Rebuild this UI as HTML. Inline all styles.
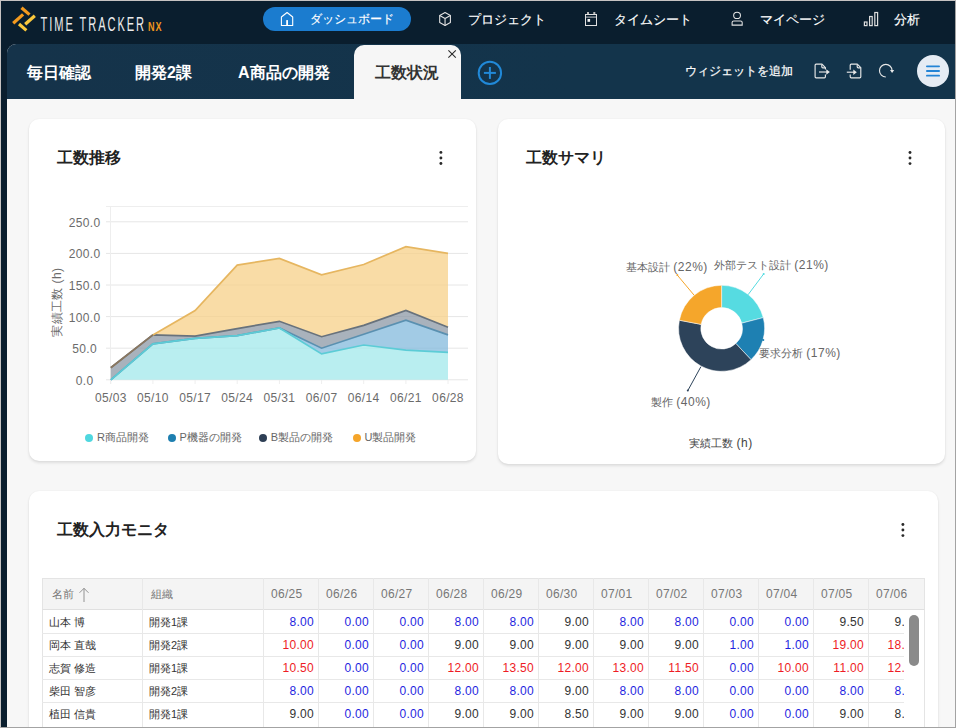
<!DOCTYPE html>
<html><head><meta charset="utf-8">
<style>
*{box-sizing:border-box;margin:0;padding:0}
html,body{width:956px;height:728px;overflow:hidden;background:#0b1d2e;font-family:"Liberation Sans",sans-serif}
#frame{position:absolute;left:0;top:0;width:956px;height:728px;background:#0a1e2e;overflow:hidden}
#border{position:absolute;left:0;top:0;width:956px;height:728px;border-top:1px solid #c6c3c2;border-left:1px solid #c6c3c2;border-right:1px solid #a3a3a3;border-bottom:1px solid #a3a3a3;z-index:100}
.abs{position:absolute}
.nav{position:absolute;color:#fff;font-size:13px;line-height:15px;white-space:nowrap;-webkit-text-stroke:0.15px currentColor}
#pill{position:absolute;left:263px;top:7px;width:148px;height:24px;border-radius:12px;background:#1b7ccf}
#main{position:absolute;left:7px;top:44px;width:949px;height:684px;border-top-left-radius:9px;overflow:hidden;background:#f7f7f7}
#tabbar{position:absolute;left:7px;top:44px;width:949px;height:55px;background:linear-gradient(90deg,#15334a 0%,#13344b 60%,#13344b 100%);border-top-left-radius:9px}
.tab{position:absolute;top:63px;color:#fff;font-size:16px;font-weight:bold;line-height:20px;white-space:nowrap}
#acttab{position:absolute;left:354px;top:45px;width:107px;height:55px;background:#f6f6f6;border-top-left-radius:10px;border-top-right-radius:10px}
.card{position:absolute;background:#fff;border-radius:10px;box-shadow:0 2px 3px rgba(0,0,0,0.10),0 0 2px rgba(0,0,0,0.06)}
.ctitle{position:absolute;font-size:16px;font-weight:bold;color:#222;line-height:20px;white-space:nowrap}
.kebab{position:absolute;width:4px;height:16px}
.kebab i{position:absolute;left:0;width:3.4px;height:3.4px;border-radius:50%;background:#333}
svg text{font-family:"Liberation Sans",sans-serif}
.ax{font-size:12px;fill:#6b6b6b;letter-spacing:0.35px}
.lb{font-size:12px;fill:#666}
.cj{font-size:11px}
.lt{font-size:12px;letter-spacing:0.5px}
.lb2{font-size:12px;fill:#444}
.leg{position:absolute;top:430px;font-size:11px;color:#666;line-height:14px;white-space:nowrap}
.leg i{display:inline-block;width:8px;height:8px;border-radius:50%;vertical-align:-0.5px;margin-right:4px}
#tbl{position:absolute;left:42px;top:578px;width:883px;height:160px;border:1px solid #e4e4e4;background:#fff}
.thbg{position:absolute;left:42px;top:578px;width:883px;height:32px;background:#f4f4f4;border:1px solid #e4e4e4;border-bottom:1px solid #e0e0e0}
.th{position:absolute;top:585px;height:18px;font-size:12px;line-height:18px;color:#777;padding-left:7px;white-space:nowrap;letter-spacing:0.3px}
.td{position:absolute;height:23px;font-size:12px;line-height:24px;color:#333;white-space:nowrap;overflow:hidden;letter-spacing:0.3px}
.cjk{font-size:11px;letter-spacing:0}
.tl{padding-left:6px}
.tr{text-align:right;padding-right:4px}
.hl{position:absolute;left:42px;width:862px;height:1px;background:#e8e8e8}
.vl{position:absolute;top:578px;width:1px;height:150px;background:#e8e8e8}
</style></head><body>
<div id="frame">
<!-- logo -->
<svg class="abs" style="left:0;top:0" width="170" height="44" viewBox="0 0 170 44">
  <g stroke-linecap="butt" stroke-width="3.2">
    <line x1="21.5" y1="7.8" x2="29.5" y2="14.6" stroke="#f39a1e"/>
    <line x1="13.2" y1="23.3" x2="23.1" y2="14.4" stroke="#f39a1e"/>
    <line x1="25.2" y1="24.3" x2="34.8" y2="15.8" stroke="#fbc93c"/>
    <line x1="19" y1="24" x2="26.4" y2="30.4" stroke="#fbc93c"/>
  </g>
  <g transform="translate(40.5,31) scale(0.56,1)"><text x="0" y="0" font-family="Liberation Sans" font-size="19.8" fill="#ececec" textLength="185" lengthAdjust="spacing">TIME TRACKER</text></g>
  <g transform="translate(148,31) scale(0.72,1)"><text x="0" y="0" font-family="Liberation Sans" font-weight="bold" font-size="12.6" fill="#f0961c" textLength="19" lengthAdjust="spacing">NX</text></g>
</svg>
<div id="pill"></div>
<!-- nav icons -->
<svg class="abs" style="left:0;top:0" width="956" height="44">
  <g fill="none" stroke="#ffffff" stroke-width="1.1" stroke-linejoin="round">
    <path d="M281.4,25.5 L281.4,17 L287.06,12.5 L292.7,17 L292.7,25.5 Z"/>
  </g>
  <rect x="286.2" y="20.1" width="1.8" height="5.5" fill="#fff"/>
  <g fill="none" stroke="#e2e2e2" stroke-width="1.1" stroke-linejoin="round">
    <path d="M445.06,12.5 L450.4,15.4 L450.4,22.5 L445.06,25.4 L439.7,22.5 L439.7,15.4 Z"/>
    <path d="M439.7,15.4 L445.06,18.4 L450.4,15.4 M445.06,18.4 L445.06,25.4"/>
  </g>
  <g fill="none" stroke="#e0e0e0" stroke-width="1">
    <rect x="585.5" y="14.5" width="11" height="11"/>
  </g>
  <rect x="586" y="16.5" width="10" height="1.2" fill="#a8adb2"/>
  <rect x="587" y="12" width="2" height="2" fill="#bbbbbb"/>
  <rect x="593.3" y="12" width="2" height="2" fill="#bbbbbb"/>
  <rect x="587.5" y="19" width="2.6" height="2.8" fill="#f4f4f4"/>
  <g fill="none" stroke="#e4e4e4" stroke-width="1.05">
    <ellipse cx="737.06" cy="15.4" rx="3.4" ry="3.1"/>
    <path d="M732.1,25.1 L732.1,22.6 Q732.1,20.9 733.8,20.9 L740.5,20.9 Q742.2,20.9 742.2,22.6 L742.2,25.1 Z"/>
  </g>
  <g fill="none" stroke="#dddddd" stroke-width="1.2">
    <rect x="864.4" y="22" width="2.6" height="3.6"/>
    <rect x="869.6" y="16.5" width="2.6" height="9.1"/>
    <rect x="874.8" y="12.5" width="2.8" height="13.1"/>
  </g>
</svg>
<div class="nav" style="left:310px;top:12px;font-size:12.3px">ダッシュボード</div>
<div class="nav" style="left:468px;top:12px">プロジェクト</div>
<div class="nav" style="left:613.5px;top:12px">タイムシート</div>
<div class="nav" style="left:760px;top:12px">マイページ</div>
<div class="nav" style="left:894px;top:12px">分析</div>

<div id="main"></div>
<div id="tabbar"></div>
<div id="acttab"></div>
<div class="tab" style="left:27px">毎日確認</div>
<div class="tab" style="left:135px">開発2課</div>
<div class="tab" style="left:238px">A商品の開発</div>
<div class="tab" style="left:375px;color:#333">工数状況</div>
<svg class="abs" style="left:0;top:40px" width="956" height="60" viewBox="0 40 956 60">
  <g stroke="#2a2a2a" stroke-width="1.05"><line x1="448.4" y1="50.3" x2="455.8" y2="57.7"/><line x1="455.8" y1="50.3" x2="448.4" y2="57.7"/></g>
  <g fill="none" stroke="#2189d8" stroke-width="2">
    <circle cx="489.9" cy="72.9" r="11.2"/>
    <line x1="489.9" y1="67" x2="489.9" y2="78.9"/><line x1="483.9" y1="72.9" x2="495.9" y2="72.9"/>
  </g>
  <g fill="none" stroke="#e8e8e8" stroke-width="1.15" stroke-linejoin="round">
    <path d="M825.4,69.6 L825.4,67.6 L822,64.2 L816.1,64.2 Q815.1,64.2 815.1,65.2 L815.1,76.8 Q815.1,77.8 816.1,77.8 L824.4,77.8 Q825.4,77.8 825.4,76.8 L825.4,74.4"/>
    <path d="M821.8,64.4 L821.8,66.8 Q821.8,67.8 822.8,67.8 L825.2,67.8"/>
    <path d="M819,72 L827,72"/>
    <path d="M850.2,69.8 L850.2,65.2 Q850.2,64.2 851.2,64.2 L857.3,64.2 L860.8,67.6 L860.8,76.8 Q860.8,77.8 859.8,77.8 L851.2,77.8 Q850.2,77.8 850.2,76.8 L850.2,74.6"/>
    <path d="M857.2,64.4 L857.2,66.8 Q857.2,67.8 858.2,67.8 L860.6,67.8"/>
    <path d="M846.8,72.2 L854,72.2"/>
    <path d="M885.8,77 A6.3,6.3 0 1 1 892.1,70.7"/>
  </g>
  <g fill="#e8e8e8">
    <path d="M826.3,69.3 L829.8,72 L826.3,74.7 Z"/>
    <path d="M853.3,69.5 L856.8,72.2 L853.3,74.9 Z"/>
    <path d="M890,70.1 L894.2,70.1 L892.1,73 Z"/>
  </g>
  <circle cx="933" cy="71" r="16" fill="#e5ecf4"/>
  <g stroke="#2384d6" stroke-width="1.8" stroke-linecap="round"><line x1="926.9" y1="66.3" x2="939.1" y2="66.3"/><line x1="926.9" y1="71" x2="939.1" y2="71"/><line x1="926.9" y1="75.7" x2="939.1" y2="75.7"/></g>
</svg>
<div class="nav" style="left:684.6px;top:63.5px;color:#fafafa;font-size:12px;-webkit-text-stroke:0.25px #fafafa">ウィジェットを追加</div>

<!-- cards -->
<div class="card" style="left:29px;top:119px;width:447px;height:342px"></div>
<div class="card" style="left:498px;top:119px;width:447px;height:345px"></div>
<div class="card" style="left:29px;top:491px;width:909px;height:260px"></div>
<div class="ctitle" style="left:57px;top:148px">工数推移</div>
<div class="ctitle" style="left:526px;top:148px">工数サマリ</div>
<div class="ctitle" style="left:57px;top:520px">工数入力モニタ</div>
<svg class="abs" style="left:0;top:0" width="956" height="728"><g fill="#2a2a2a"><circle cx="440.9" cy="152.40" r="1.45"/><circle cx="440.9" cy="157.95" r="1.45"/><circle cx="440.9" cy="163.50" r="1.45"/><circle cx="910" cy="152.50" r="1.45"/><circle cx="910" cy="158.05" r="1.45"/><circle cx="910" cy="163.60" r="1.45"/><circle cx="902.9" cy="524.50" r="1.45"/><circle cx="902.9" cy="530.05" r="1.45"/><circle cx="902.9" cy="535.60" r="1.45"/></g></svg>



<svg class="abs" style="left:0;top:0" width="956" height="728" viewBox="0 0 956 728">
<line x1="106" y1="379.8" x2="468" y2="379.8" stroke="#e6e6e6" stroke-width="1"/>
<text x="84.7" y="384.8" text-anchor="middle" class="ax">0.0</text>
<line x1="106" y1="348.2" x2="468" y2="348.2" stroke="#e6e6e6" stroke-width="1"/>
<text x="84.7" y="353.2" text-anchor="middle" class="ax">50.0</text>
<line x1="106" y1="316.6" x2="468" y2="316.6" stroke="#e6e6e6" stroke-width="1"/>
<text x="84.7" y="321.6" text-anchor="middle" class="ax">100.0</text>
<line x1="106" y1="285.0" x2="468" y2="285.0" stroke="#e6e6e6" stroke-width="1"/>
<text x="84.7" y="290.0" text-anchor="middle" class="ax">150.0</text>
<line x1="106" y1="253.4" x2="468" y2="253.4" stroke="#e6e6e6" stroke-width="1"/>
<text x="84.7" y="258.4" text-anchor="middle" class="ax">200.0</text>
<line x1="106" y1="221.8" x2="468" y2="221.8" stroke="#e6e6e6" stroke-width="1"/>
<text x="84.7" y="226.8" text-anchor="middle" class="ax">250.0</text>
<line x1="106" y1="206.5" x2="468" y2="206.5" stroke="#eeeeee" stroke-width="1"/>
<line x1="110.5" y1="206" x2="110.5" y2="384" stroke="#eeeeee" stroke-width="1"/>
<line x1="110.8" y1="380" x2="110.8" y2="384" stroke="#eeeeee" stroke-width="1"/>
<text x="110.8" y="402" text-anchor="middle" class="ax">05/03</text>
<line x1="152.9" y1="380" x2="152.9" y2="384" stroke="#eeeeee" stroke-width="1"/>
<text x="152.9" y="402" text-anchor="middle" class="ax">05/10</text>
<line x1="195.1" y1="380" x2="195.1" y2="384" stroke="#eeeeee" stroke-width="1"/>
<text x="195.1" y="402" text-anchor="middle" class="ax">05/17</text>
<line x1="237.2" y1="380" x2="237.2" y2="384" stroke="#eeeeee" stroke-width="1"/>
<text x="237.2" y="402" text-anchor="middle" class="ax">05/24</text>
<line x1="279.4" y1="380" x2="279.4" y2="384" stroke="#eeeeee" stroke-width="1"/>
<text x="279.4" y="402" text-anchor="middle" class="ax">05/31</text>
<line x1="321.6" y1="380" x2="321.6" y2="384" stroke="#eeeeee" stroke-width="1"/>
<text x="321.6" y="402" text-anchor="middle" class="ax">06/07</text>
<line x1="363.7" y1="380" x2="363.7" y2="384" stroke="#eeeeee" stroke-width="1"/>
<text x="363.7" y="402" text-anchor="middle" class="ax">06/14</text>
<line x1="405.9" y1="380" x2="405.9" y2="384" stroke="#eeeeee" stroke-width="1"/>
<text x="405.9" y="402" text-anchor="middle" class="ax">06/21</text>
<line x1="448.0" y1="380" x2="448.0" y2="384" stroke="#eeeeee" stroke-width="1"/>
<text x="448.0" y="402" text-anchor="middle" class="ax">06/28</text>
<g fill-opacity="0.75">
<path d="M110.8,379.8 L152.9,343.8 L195.1,338.4 L237.2,335.6 L279.4,328.0 L321.6,353.9 L363.7,345.0 L405.9,350.1 L448.0,352.3 L448.0,379.8 L405.9,379.8 L363.7,379.8 L321.6,379.8 L279.4,379.8 L237.2,379.8 L195.1,379.8 L152.9,379.8 L110.8,379.8 Z" fill="#a2e8eb"/>
<path d="M110.8,379.8 L152.9,343.8 L195.1,338.4 L237.2,335.6 L279.4,328.0 L321.6,348.2 L363.7,334.3 L405.9,320.1 L448.0,334.9 L448.0,352.3 L405.9,350.1 L363.7,345.0 L321.6,353.9 L279.4,328.0 L237.2,335.6 L195.1,338.4 L152.9,343.8 L110.8,379.8 Z" fill="#83badc"/>
<path d="M110.8,367.7 L152.9,334.9 L195.1,336.2 L237.2,328.6 L279.4,321.3 L321.6,336.7 L363.7,325.4 L405.9,310.5 L448.0,327.3 L448.0,334.9 L405.9,320.1 L363.7,334.3 L321.6,348.2 L279.4,328.0 L237.2,335.6 L195.1,338.4 L152.9,343.8 L110.8,379.8 Z" fill="#8c98a6"/>
<path d="M110.8,367.7 L152.9,334.9 L195.1,310.5 L237.2,265.1 L279.4,258.5 L321.6,274.9 L363.7,264.5 L405.9,246.6 L448.0,253.4 L448.0,327.3 L405.9,310.5 L363.7,325.4 L321.6,336.7 L279.4,321.3 L237.2,328.6 L195.1,336.2 L152.9,334.9 L110.8,367.7 Z" fill="#f7d088"/>
</g>
<path d="M110.8,379.8 L152.9,343.8 L195.1,338.4 L237.2,335.6 L279.4,328.0 L321.6,348.2 L363.7,334.3 L405.9,320.1 L448.0,334.9" fill="none" stroke="#5a90b0" stroke-width="1.7"/>
<path d="M110.8,379.8 L152.9,343.8 L195.1,338.4 L237.2,335.6 L279.4,328.0 L321.6,353.9 L363.7,345.0 L405.9,350.1 L448.0,352.3" fill="none" stroke="#5cccd6" stroke-width="1.7"/>
<path d="M110.8,367.7 L152.9,334.9 L195.1,336.2 L237.2,328.6 L279.4,321.3 L321.6,336.7 L363.7,325.4 L405.9,310.5 L448.0,327.3" fill="none" stroke="#68727c" stroke-width="1.7"/>
<path d="M110.8,367.7 L152.9,334.9" fill="none" stroke="#8a7760" stroke-width="1.8"/>
<path d="M152.9,334.9 L195.1,310.5 L237.2,265.1 L279.4,258.5 L321.6,274.9 L363.7,264.5 L405.9,246.6 L448.0,253.4" fill="none" stroke="#e6b660" stroke-width="1.7"/>
<text transform="translate(60.5,302) rotate(-90)" text-anchor="middle" class="ax" style="font-size:11.5px">実績工数 <tspan style="font-size:12px;letter-spacing:0.5px">(h)</tspan></text>
<path d="M721.60,285.30 A43,43 0 0 1 763.25,317.61 L741.75,323.13 A20.8,20.8 0 0 0 721.60,307.50 Z" fill="#56dbe1" stroke="#ffffff" stroke-width="0.5"/>
<path d="M763.25,317.61 A43,43 0 0 1 751.04,359.65 L735.84,343.46 A20.8,20.8 0 0 0 741.75,323.13 Z" fill="#1e80b2" stroke="#ffffff" stroke-width="0.5"/>
<path d="M751.04,359.65 A43,43 0 0 1 679.36,320.24 L701.17,324.40 A20.8,20.8 0 0 0 735.84,343.46 Z" fill="#2d435a" stroke="#ffffff" stroke-width="0.5"/>
<path d="M679.36,320.24 A43,43 0 0 1 721.60,285.30 L721.60,307.50 A20.8,20.8 0 0 0 701.17,324.40 Z" fill="#f5a62b" stroke="#ffffff" stroke-width="0.5"/>
<line x1="677.3" y1="275.1" x2="694.1" y2="295.2" stroke="#f5a62b" stroke-width="1"/>
<line x1="763.7" y1="273.9" x2="748.1" y2="294.7" stroke="#56dbe1" stroke-width="1"/>
<line x1="700.9" y1="366.7" x2="687.8" y2="390.6" stroke="#2d435a" stroke-width="1"/>
<line x1="759" y1="338" x2="763" y2="340" stroke="#1e80b2" stroke-width="1"/>
<circle cx="677.3" cy="275.1" r="1" fill="#f5a62b"/><circle cx="763.7" cy="273.9" r="1" fill="#56dbe1"/><circle cx="687.8" cy="390.6" r="1" fill="#2d435a"/><circle cx="763.3" cy="340" r="1" fill="#1e80b2"/>
<text x="626" y="270.5" class="lb"><tspan class="cj">基本設計</tspan> <tspan class="lt">(22%)</tspan></text>
<text x="714" y="268.5" class="lb"><tspan class="cj">外部テスト設計</tspan> <tspan class="lt">(21%)</tspan></text>
<text x="759" y="356.5" class="lb"><tspan class="cj">要求分析</tspan> <tspan class="lt">(17%)</tspan></text>
<text x="651" y="406" class="lb"><tspan class="cj">製作</tspan> <tspan class="lt">(40%)</tspan></text>
<text x="721" y="447" text-anchor="middle" class="lb2"><tspan class="cj">実績工数</tspan> <tspan class="lt">(h)</tspan></text>
</svg>
<div class="leg" style="left:85px"><i style="background:#4fd7df"></i>R商品開発</div>
<div class="leg" style="left:167.5px"><i style="background:#1e7fb0"></i>P機器の開発</div>
<div class="leg" style="left:258.7px"><i style="background:#2e3f55"></i>B製品の開発</div>
<div class="leg" style="left:352.5px"><i style="background:#f5a52a"></i>U製品開発</div>

<!-- table -->
<div id="tbl"></div>
<div class="thbg"></div>
<div class="hl" style="top:633px"></div>
<div class="hl" style="top:656px"></div>
<div class="hl" style="top:679px"></div>
<div class="hl" style="top:702px"></div>
<div class="vl" style="left:142px"></div>
<div class="vl" style="left:263px"></div>
<div class="vl" style="left:318px"></div>
<div class="vl" style="left:373px"></div>
<div class="vl" style="left:428px"></div>
<div class="vl" style="left:483px"></div>
<div class="vl" style="left:538px"></div>
<div class="vl" style="left:593px"></div>
<div class="vl" style="left:648px"></div>
<div class="vl" style="left:703px"></div>
<div class="vl" style="left:758px"></div>
<div class="vl" style="left:813px"></div>
<div class="vl" style="left:868px"></div>
<div class="th cjk" style="left:45px;width:99px">名前</div><svg class="abs" style="left:77.5px;top:587px" width="12" height="16"><path d="M6,1.3 L6,15 M1.5,5.8 L6,1.3 L10.5,5.8" fill="none" stroke="#888" stroke-width="0.9"/></svg>
<div class="th cjk" style="left:144px;width:120px">組織</div>
<div class="th" style="left:264px;width:54px">06/25</div>
<div class="th" style="left:319px;width:54px">06/26</div>
<div class="th" style="left:374px;width:54px">06/27</div>
<div class="th" style="left:429px;width:54px">06/28</div>
<div class="th" style="left:484px;width:54px">06/29</div>
<div class="th" style="left:539px;width:54px">06/30</div>
<div class="th" style="left:594px;width:54px">07/01</div>
<div class="th" style="left:649px;width:54px">07/02</div>
<div class="th" style="left:704px;width:54px">07/03</div>
<div class="th" style="left:759px;width:54px">07/04</div>
<div class="th" style="left:814px;width:54px">07/05</div>
<div class="th" style="left:869px;width:54px">07/06</div>
<div class="td tl cjk" style="left:43px;top:610px;width:99px">山本 博</div>
<div class="td tl cjk" style="left:143px;top:610px;width:120px">開発1課</div>
<div class="td tr" style="left:264px;top:610px;width:54px;color:#1f1fe0">8.00</div>
<div class="td tr" style="left:319px;top:610px;width:54px;color:#1f1fe0">0.00</div>
<div class="td tr" style="left:374px;top:610px;width:54px;color:#1f1fe0">0.00</div>
<div class="td tr" style="left:429px;top:610px;width:54px;color:#1f1fe0">8.00</div>
<div class="td tr" style="left:484px;top:610px;width:54px;color:#1f1fe0">8.00</div>
<div class="td tr" style="left:539px;top:610px;width:54px;color:#333">9.00</div>
<div class="td tr" style="left:594px;top:610px;width:54px;color:#1f1fe0">8.00</div>
<div class="td tr" style="left:649px;top:610px;width:54px;color:#1f1fe0">8.00</div>
<div class="td tr" style="left:704px;top:610px;width:54px;color:#1f1fe0">0.00</div>
<div class="td tr" style="left:759px;top:610px;width:54px;color:#1f1fe0">0.00</div>
<div class="td tr" style="left:814px;top:610px;width:54px;color:#333">9.50</div>
<div class="td tr" style="left:869px;top:610px;width:54px;color:#333">9.00</div>
<div class="td tl cjk" style="left:43px;top:633px;width:99px">岡本 直哉</div>
<div class="td tl cjk" style="left:143px;top:633px;width:120px">開発2課</div>
<div class="td tr" style="left:264px;top:633px;width:54px;color:#ee1c25">10.00</div>
<div class="td tr" style="left:319px;top:633px;width:54px;color:#1f1fe0">0.00</div>
<div class="td tr" style="left:374px;top:633px;width:54px;color:#1f1fe0">0.00</div>
<div class="td tr" style="left:429px;top:633px;width:54px;color:#333">9.00</div>
<div class="td tr" style="left:484px;top:633px;width:54px;color:#333">9.00</div>
<div class="td tr" style="left:539px;top:633px;width:54px;color:#333">9.00</div>
<div class="td tr" style="left:594px;top:633px;width:54px;color:#333">9.00</div>
<div class="td tr" style="left:649px;top:633px;width:54px;color:#333">9.00</div>
<div class="td tr" style="left:704px;top:633px;width:54px;color:#1f1fe0">1.00</div>
<div class="td tr" style="left:759px;top:633px;width:54px;color:#1f1fe0">1.00</div>
<div class="td tr" style="left:814px;top:633px;width:54px;color:#ee1c25">19.00</div>
<div class="td tr" style="left:869px;top:633px;width:54px;color:#ee1c25">18.00</div>
<div class="td tl cjk" style="left:43px;top:656px;width:99px">志賀 修造</div>
<div class="td tl cjk" style="left:143px;top:656px;width:120px">開発1課</div>
<div class="td tr" style="left:264px;top:656px;width:54px;color:#ee1c25">10.50</div>
<div class="td tr" style="left:319px;top:656px;width:54px;color:#1f1fe0">0.00</div>
<div class="td tr" style="left:374px;top:656px;width:54px;color:#1f1fe0">0.00</div>
<div class="td tr" style="left:429px;top:656px;width:54px;color:#ee1c25">12.00</div>
<div class="td tr" style="left:484px;top:656px;width:54px;color:#ee1c25">13.50</div>
<div class="td tr" style="left:539px;top:656px;width:54px;color:#ee1c25">12.00</div>
<div class="td tr" style="left:594px;top:656px;width:54px;color:#ee1c25">13.00</div>
<div class="td tr" style="left:649px;top:656px;width:54px;color:#ee1c25">11.50</div>
<div class="td tr" style="left:704px;top:656px;width:54px;color:#1f1fe0">0.00</div>
<div class="td tr" style="left:759px;top:656px;width:54px;color:#ee1c25">10.00</div>
<div class="td tr" style="left:814px;top:656px;width:54px;color:#ee1c25">11.00</div>
<div class="td tr" style="left:869px;top:656px;width:54px;color:#ee1c25">12.00</div>
<div class="td tl cjk" style="left:43px;top:679px;width:99px">柴田 智彦</div>
<div class="td tl cjk" style="left:143px;top:679px;width:120px">開発2課</div>
<div class="td tr" style="left:264px;top:679px;width:54px;color:#1f1fe0">8.00</div>
<div class="td tr" style="left:319px;top:679px;width:54px;color:#1f1fe0">0.00</div>
<div class="td tr" style="left:374px;top:679px;width:54px;color:#1f1fe0">0.00</div>
<div class="td tr" style="left:429px;top:679px;width:54px;color:#1f1fe0">8.00</div>
<div class="td tr" style="left:484px;top:679px;width:54px;color:#1f1fe0">8.00</div>
<div class="td tr" style="left:539px;top:679px;width:54px;color:#333">9.00</div>
<div class="td tr" style="left:594px;top:679px;width:54px;color:#1f1fe0">8.00</div>
<div class="td tr" style="left:649px;top:679px;width:54px;color:#1f1fe0">8.00</div>
<div class="td tr" style="left:704px;top:679px;width:54px;color:#1f1fe0">0.00</div>
<div class="td tr" style="left:759px;top:679px;width:54px;color:#1f1fe0">0.00</div>
<div class="td tr" style="left:814px;top:679px;width:54px;color:#1f1fe0">8.00</div>
<div class="td tr" style="left:869px;top:679px;width:54px;color:#1f1fe0">8.00</div>
<div class="td tl cjk" style="left:43px;top:702px;width:99px">植田 信貴</div>
<div class="td tl cjk" style="left:143px;top:702px;width:120px">開発1課</div>
<div class="td tr" style="left:264px;top:702px;width:54px;color:#333">9.00</div>
<div class="td tr" style="left:319px;top:702px;width:54px;color:#1f1fe0">0.00</div>
<div class="td tr" style="left:374px;top:702px;width:54px;color:#1f1fe0">0.00</div>
<div class="td tr" style="left:429px;top:702px;width:54px;color:#333">9.00</div>
<div class="td tr" style="left:484px;top:702px;width:54px;color:#333">9.00</div>
<div class="td tr" style="left:539px;top:702px;width:54px;color:#333">8.50</div>
<div class="td tr" style="left:594px;top:702px;width:54px;color:#333">9.00</div>
<div class="td tr" style="left:649px;top:702px;width:54px;color:#333">9.00</div>
<div class="td tr" style="left:704px;top:702px;width:54px;color:#1f1fe0">0.00</div>
<div class="td tr" style="left:759px;top:702px;width:54px;color:#1f1fe0">0.00</div>
<div class="td tr" style="left:814px;top:702px;width:54px;color:#333">9.00</div>
<div class="td tr" style="left:869px;top:702px;width:54px;color:#333">8.00</div>
<div class="abs" style="left:904px;top:610px;width:20px;height:120px;background:#fff"></div>
<div class="abs" style="left:909px;top:615px;width:10px;height:51px;border-radius:5px;background:#8a8a8a"></div>
</div>
<div id="border"></div>
</body></html>
